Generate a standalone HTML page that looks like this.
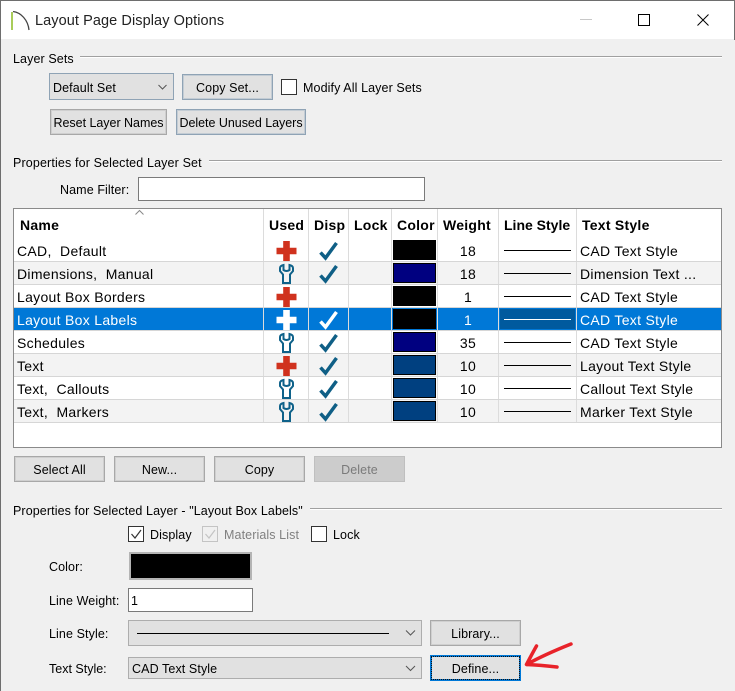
<!DOCTYPE html>
<html><head><meta charset="utf-8"><title>Layout Page Display Options</title>
<style>
html,body{margin:0;padding:0;background:#f0f0f0}
#w{position:relative;width:735px;height:691px;overflow:hidden;background:#f0f0f0;font-family:"Liberation Sans",sans-serif;font-size:12.5px;color:#000}
#w div{position:absolute;box-sizing:border-box}
.t{white-space:nowrap;line-height:16px;height:16px;letter-spacing:.1px;margin-top:1px}
.r{font-size:14px;line-height:18px;height:18px;letter-spacing:.3px;white-space:nowrap}
.h{font-size:14px;font-weight:bold;line-height:18px;height:18px;white-space:nowrap;letter-spacing:.25px}
.c{text-align:center}
.b{background:#e1e1e1;border:1px solid #a8a8a8;box-shadow:inset 0 0 0 1px #cfcfcf;text-align:center;line-height:26px;letter-spacing:.1px;white-space:nowrap}
.bl{border-color:#8fa3b5;box-shadow:inset 0 0 0 1px #c3ccd4}
.cb{width:16px;height:16px;background:#fff;border:1px solid #333}
.sw{left:393px;width:43px;height:20px;background:#000;border:1px solid #000}
svg{position:absolute;left:0;top:0}
</style></head><body><div id="w">
<div style="left:0;top:0;width:735px;height:39px;background:#fff"></div>
<div class="t" style="left:35px;top:12px;margin-top:0;font-size:14.5px;height:18px;line-height:18px;color:#222;letter-spacing:.08px">Layout Page Display Options</div>

<div class="t" style="left:13px;top:50px">Layer Sets</div>
<div class="t" style="left:13px;top:154px;letter-spacing:.14px">Properties for Selected Layer Set</div>
<div class="t" style="left:13px;top:502px">Properties for Selected Layer - "Layout Box Labels"</div>

<div style="left:49px;top:73px;width:125px;height:27px;background:#e1e1e1;border:1px solid #8fa3b5"></div>
<div class="t" style="left:53px;top:79px">Default Set</div>
<div class="b bl" style="left:182px;top:74px;width:91px;height:26px">Copy Set...</div>
<div class="cb" style="left:281px;top:79px"></div>
<div class="t" style="left:303px;top:79px">Modify All Layer Sets</div>
<div class="b" style="left:50px;top:109px;width:117px;height:26px;letter-spacing:-.03px">Reset Layer Names</div>
<div class="b bl" style="left:176px;top:109px;width:130px;height:26px;letter-spacing:-.03px">Delete Unused Layers</div>

<div class="t" style="left:60px;top:181px">Name Filter:</div>
<div style="left:138px;top:177px;width:287px;height:24px;background:#fff;border:1px solid #7a7a7a"></div>

<!-- table -->
<div style="left:13px;top:208px;width:709px;height:240px;background:#fff;border:1px solid #8a8a8a"></div>
<div style="left:14px;top:262px;width:707px;height:22px;background:#f3f3f3"></div>
<div style="left:14px;top:354px;width:707px;height:22px;background:#f3f3f3"></div>
<div style="left:14px;top:400px;width:707px;height:22px;background:#f3f3f3"></div>
<div style="left:14px;top:308px;width:707px;height:22px;background:#0078d7"></div>
<div style="left:500px;top:309px;width:75px;height:20px;background:#005a9e"></div>

<div class="sw" style="top:240px"></div>
<div class="sw" style="top:263px;background:#000080"></div>
<div class="sw" style="top:286px"></div>
<div class="sw" style="top:309px"></div>
<div class="sw" style="top:332px;background:#000080"></div>
<div class="sw" style="top:355px;background:#004080"></div>
<div class="sw" style="top:378px;background:#004080"></div>
<div class="sw" style="top:401px;background:#004080"></div>

<div class="h" style="left:20px;top:216px">Name</div>
<div class="h" style="left:269px;top:216px">Used</div>
<div class="h" style="left:314px;top:216px">Disp</div>
<div class="h" style="left:354px;top:216px">Lock</div>
<div class="h" style="left:397px;top:216px">Color</div>
<div class="h" style="left:443px;top:216px">Weight</div>
<div class="h" style="left:504px;top:216px;letter-spacing:0">Line Style</div>
<div class="h" style="left:582px;top:216px">Text Style</div>

<div class="r" style="left:17px;top:242px">CAD,&nbsp; Default</div>
<div class="r" style="left:17px;top:265px">Dimensions,&nbsp; Manual</div>
<div class="r" style="left:17px;top:288px">Layout Box Borders</div>
<div class="r" style="left:17px;top:311px;color:#fff">Layout Box Labels</div>
<div class="r" style="left:17px;top:334px">Schedules</div>
<div class="r" style="left:17px;top:357px">Text</div>
<div class="r" style="left:17px;top:380px">Text,&nbsp; Callouts</div>
<div class="r" style="left:17px;top:403px">Text,&nbsp; Markers</div>

<div class="r c" style="left:438px;width:60px;top:242px">18</div>
<div class="r c" style="left:438px;width:60px;top:265px">18</div>
<div class="r c" style="left:438px;width:60px;top:288px">1</div>
<div class="r c" style="left:438px;width:60px;top:311px;color:#fff">1</div>
<div class="r c" style="left:438px;width:60px;top:334px">35</div>
<div class="r c" style="left:438px;width:60px;top:357px">10</div>
<div class="r c" style="left:438px;width:60px;top:380px">10</div>
<div class="r c" style="left:438px;width:60px;top:403px">10</div>

<div class="r" style="left:580px;top:242px">CAD Text Style</div>
<div class="r" style="left:580px;top:265px">Dimension Text ...</div>
<div class="r" style="left:580px;top:288px">CAD Text Style</div>
<div class="r" style="left:580px;top:311px;color:#fff">CAD Text Style</div>
<div class="r" style="left:580px;top:334px">CAD Text Style</div>
<div class="r" style="left:580px;top:357px">Layout Text Style</div>
<div class="r" style="left:580px;top:380px">Callout Text Style</div>
<div class="r" style="left:580px;top:403px">Marker Text Style</div>

<div class="b" style="left:14px;top:456px;width:91px;height:26px">Select All</div>
<div class="b" style="left:114px;top:456px;width:91px;height:26px">New...</div>
<div class="b" style="left:214px;top:456px;width:91px;height:26px">Copy</div>
<div class="b" style="left:314px;top:456px;width:91px;height:26px;background:#ccc;border-color:#bfbfbf;box-shadow:none;color:#7a7a7a">Delete</div>

<div class="cb" style="left:128px;top:526px"></div>
<div class="t" style="left:150px;top:526px">Display</div>
<div class="cb" style="left:202px;top:526px;border-color:#c4c4c4;background:#f0f0f0"></div>
<div class="t" style="left:224px;top:526px;color:#808080">Materials List</div>
<div class="cb" style="left:311px;top:526px"></div>
<div class="t" style="left:333px;top:526px">Lock</div>

<div class="t" style="left:49px;top:558px">Color:</div>
<div style="left:129px;top:552px;width:123px;height:28px;background:#000;border:2px solid #b4b4b4"></div>
<div class="t" style="left:49px;top:592px">Line Weight:</div>
<div style="left:128px;top:588px;width:125px;height:24px;background:#fff;border:1px solid #7a7a7a"></div>
<div class="t" style="left:131px;top:592px">1</div>
<div class="t" style="left:49px;top:625px">Line Style:</div>
<div style="left:128px;top:620px;width:294px;height:26px;background:#e1e1e1;border:1px solid #adadad"></div>
<div class="b" style="left:430px;top:620px;width:91px;height:26px">Library...</div>
<div class="t" style="left:49px;top:660px;letter-spacing:0">Text Style:</div>
<div style="left:128px;top:657px;width:294px;height:22px;background:#e1e1e1;border:1px solid #adadad"></div>
<div class="t" style="left:132px;top:660px">CAD Text Style</div>
<div class="b" style="left:430px;top:655px;width:91px;height:26px;border:2px solid #0078d7;box-shadow:none;line-height:24px">Define...</div>
<div style="left:431px;top:656px;width:89px;height:24px;border:1px dotted #111"></div>

<svg width="735" height="691" viewBox="0 0 735 691" fill="none">
<defs>
<path id="plus" d="M-3.300-10H3.300V-3.300H10V3.300H3.300V10H-3.300V3.300H-10V-3.300H-3.300Z" fill="#d0321e"/>
<path id="plusw" d="M-3.300-10H3.300V-3.300H10V3.300H3.300V10H-3.300V3.300H-10V-3.300H-3.300Z" fill="#fff"/>
<path id="wr" d="M-3-9V-4Q0-2 3-4V-9C5-8.500 6.500-7.500 6.500-6V-3L3.500 .5V9H-3.500V.5L-6.500-3V-6C-6.500-7.500-5-8.500-3-9Z" stroke="#0f628a" stroke-width="2"/>
<path id="ck" d="M-8.500 2.500-3.500 8 7.500-7" stroke="#0f5f86" stroke-width="3.500"/>
</defs>
<!-- window frame -->
<path d="M.5 691V.5H734.500" stroke="#6e6e6e"/><path d="M734.500 0V40" stroke="#6e6e6e"/>
<!-- logo -->
<path d="M12 12V30" stroke="#a9cc5a" stroke-width="2"/>
<path d="M13 11.500C21 12.500 28 20 29 30" stroke="#444" stroke-width="1.300"/>
<!-- window buttons -->
<path d="M580 19.500H592" stroke="#c8c8c8"/>
<path d="M638.500 14.500H649.500V25.500H638.500Z" stroke="#000" stroke-width="1"/>
<path d="M697.500 14.500 708.500 25.500M708.500 14.500 697.500 25.500" stroke="#000" stroke-width="1"/>
<!-- group lines -->
<path d="M80 56.500H722M209 160.500H722M310 508.500H722" stroke="#a0a0a0"/>
<path d="M80 57.500H722M209 161.500H722M310 509.500H722" stroke="#fff"/>
<!-- chevrons -->
<path d="M158.500 85 162.500 89 166.500 85M406 630.500 410.500 635 415 630.500M406 666 410.500 670.500 415 666" stroke="#555"/>
<!-- sort arrow -->
<path d="M135.500 214.500 139.500 210.500 143.500 214.500" stroke="#888"/>
<!-- grid -->
<path d="M263.500 209V423M308.500 209V423M348.500 209V423M391.500 209V423M437.500 209V423M498.500 209V423M576.500 209V423" stroke="#dcdcdc"/>
<path d="M14 261.500H721M14 284.500H721M14 307.500H721M14 330.500H721M14 353.500H721M14 376.500H721M14 399.500H721M14 422.500H721" stroke="#d6d6d6"/>
<!-- line style samples -->
<path d="M504 250.500H571M504 273.500H571M504 296.500H571M504 342.500H571M504 365.500H571M504 388.500H571M504 411.500H571" stroke="#000"/>
<path d="M504 319.500H571" stroke="#fff"/>
<path d="M137 633.500H389" stroke="#000"/>
<!-- used icons -->
<use href="#plus" x="286.500" y="251"/>
<use href="#wr" x="286.500" y="274"/>
<use href="#plus" x="286.500" y="297"/>
<use href="#plusw" x="286.500" y="320"/>
<use href="#wr" x="286.500" y="343"/>
<use href="#plus" x="286.500" y="366"/>
<use href="#wr" x="286.500" y="389"/>
<use href="#wr" x="286.500" y="412"/>
<!-- disp checks -->
<use href="#ck" x="329" y="250"/>
<use href="#ck" x="329" y="273"/>
<path d="M320.500 321.500 325.500 327 336.500 312" stroke="#fff" stroke-width="3.500"/>
<use href="#ck" x="329" y="342"/>
<use href="#ck" x="329" y="365"/>
<use href="#ck" x="329" y="388"/>
<use href="#ck" x="329" y="411"/>
<!-- form checks -->
<path d="M131.500 534 135 538 141 530" stroke="#333" stroke-width="1.200"/>
<path d="M205.500 534 209 538 215 530" stroke="#c4c4c4" stroke-width="1.200"/>
<!-- red arrow -->
<path d="M571 644C556 650 540 657 526.500 664.500 538 665 548 666 557 667M536.500 646C533 652 530 658 526.500 664.500" stroke="#e8232a" stroke-width="3.500" stroke-linecap="round" stroke-linejoin="round"/>
</svg>
</div></body></html>
